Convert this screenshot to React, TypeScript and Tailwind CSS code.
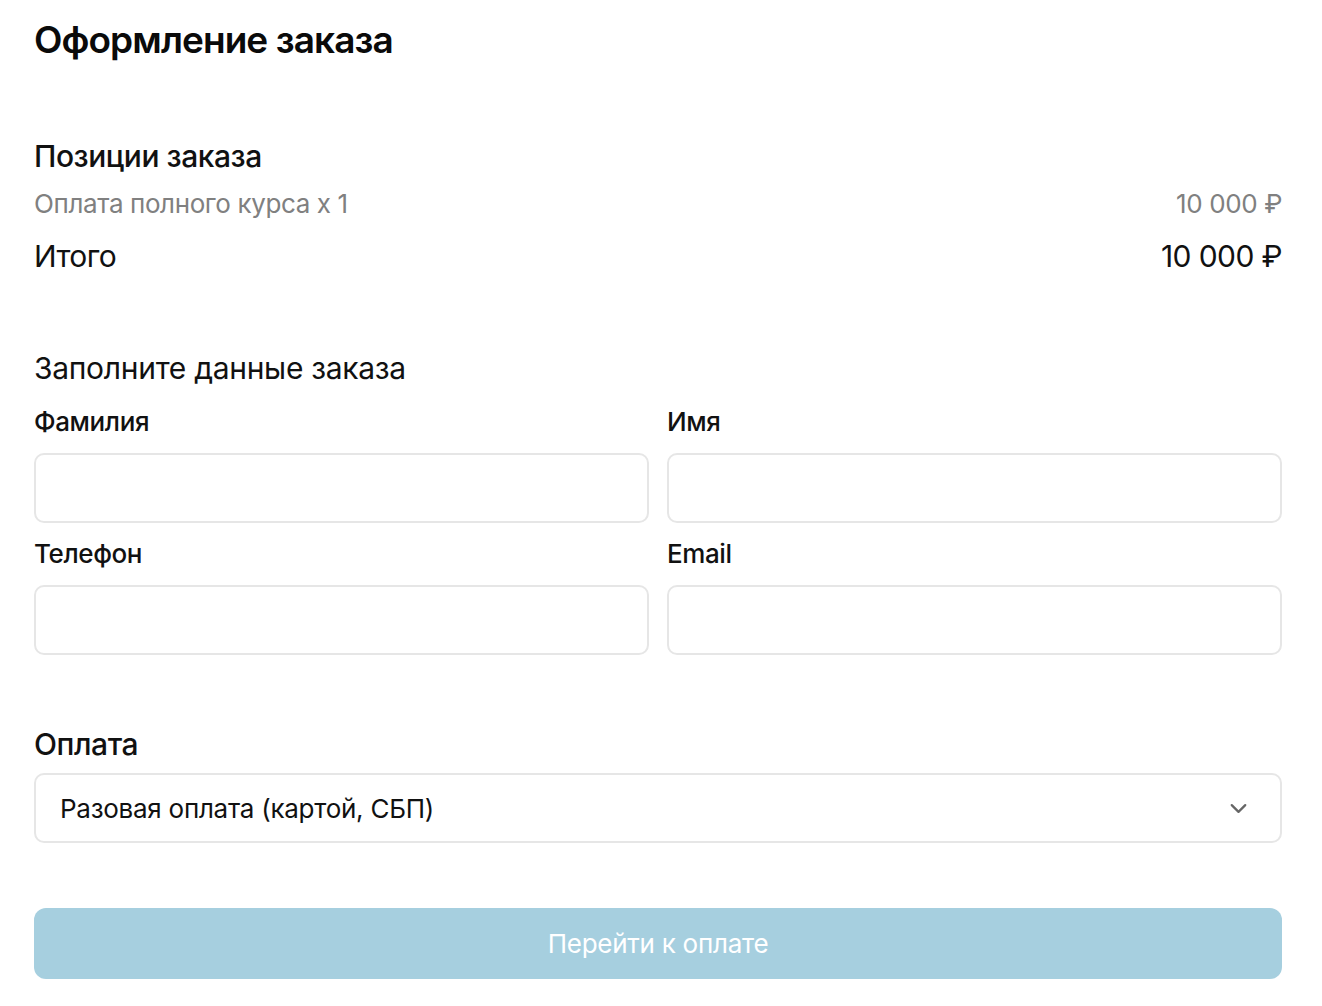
import { ChevronDown } from "lucide-react";

const font = { fontFamily: "Inter, 'Noto Sans', sans-serif" };

function Field({ label }: { label: string }) {
  return (
    <div className="flex flex-col">
      <label className="text-[26px] font-medium leading-[30px] text-[#111] tracking-[-0.015em]">
        {label}
      </label>
      <input
        type="text"
        className="mt-[16px] h-[70px] w-full rounded-[10px] border-2 border-[#e6e6e6] bg-white px-[24px] text-[24px] outline-none"
      />
    </div>
  );
}

export default function App() {
  return (
    <div
      className="min-h-screen bg-white pl-[34px] pr-[40px] text-[#111]"
      style={font}
    >
      <h1 className="pt-[17px] text-[37px] font-semibold leading-[46px] tracking-[-0.025em] text-[#0a0a0a]">
        Оформление заказа
      </h1>

      {/* Позиции */}
      <section className="mt-[75px]">
        <h2 className="text-[30px] font-medium leading-[36px] tracking-[-0.015em]">
          Позиции заказа
        </h2>
        <div className="mt-[14px] flex items-center justify-between text-[26px] leading-[32px] text-[#808080] tracking-[-0.015em]">
          <span>Оплата полного курса x 1</span>
          <span>10 000 ₽</span>
        </div>
        <div className="mt-[18px] flex items-center justify-between text-[30px] leading-[36px] tracking-[-0.02em]">
          <span>Итого</span>
          <span>10 000 ₽</span>
        </div>
      </section>

      {/* Данные */}
      <section className="mt-[76px]">
        <h2 className="text-[30px] leading-[36px] tracking-[-0.01em]">
          Заполните данные заказа
        </h2>
        <div className="mt-[21px] grid grid-cols-2 gap-x-[18px] gap-y-[16px]">
          <Field label="Фамилия" />
          <Field label="Имя" />
          <Field label="Телефон" />
          <Field label="Email" />
        </div>
      </section>

      {/* Оплата */}
      <section className="mt-[71px]">
        <h2 className="text-[30px] font-medium leading-[36px] tracking-[-0.015em]">
          Оплата
        </h2>
        <div className="mt-[11px] flex h-[70px] items-center justify-between rounded-[10px] border-2 border-[#e6e6e6] pl-[24px] pr-[28px]">
          <span className="text-[26px] tracking-[-0.01em]">
            Разовая оплата (картой, СБП)
          </span>
          <ChevronDown className="h-[27px] w-[27px] text-[#666]" strokeWidth={2} />
        </div>
      </section>

      <button
        disabled
        className="mt-[65px] flex h-[71px] w-full items-center justify-center rounded-[12px] bg-[#a6cfdf] text-[26px] tracking-[-0.01em] text-white"
      >
        Перейти к оплате
      </button>
    </div>
  );
}
